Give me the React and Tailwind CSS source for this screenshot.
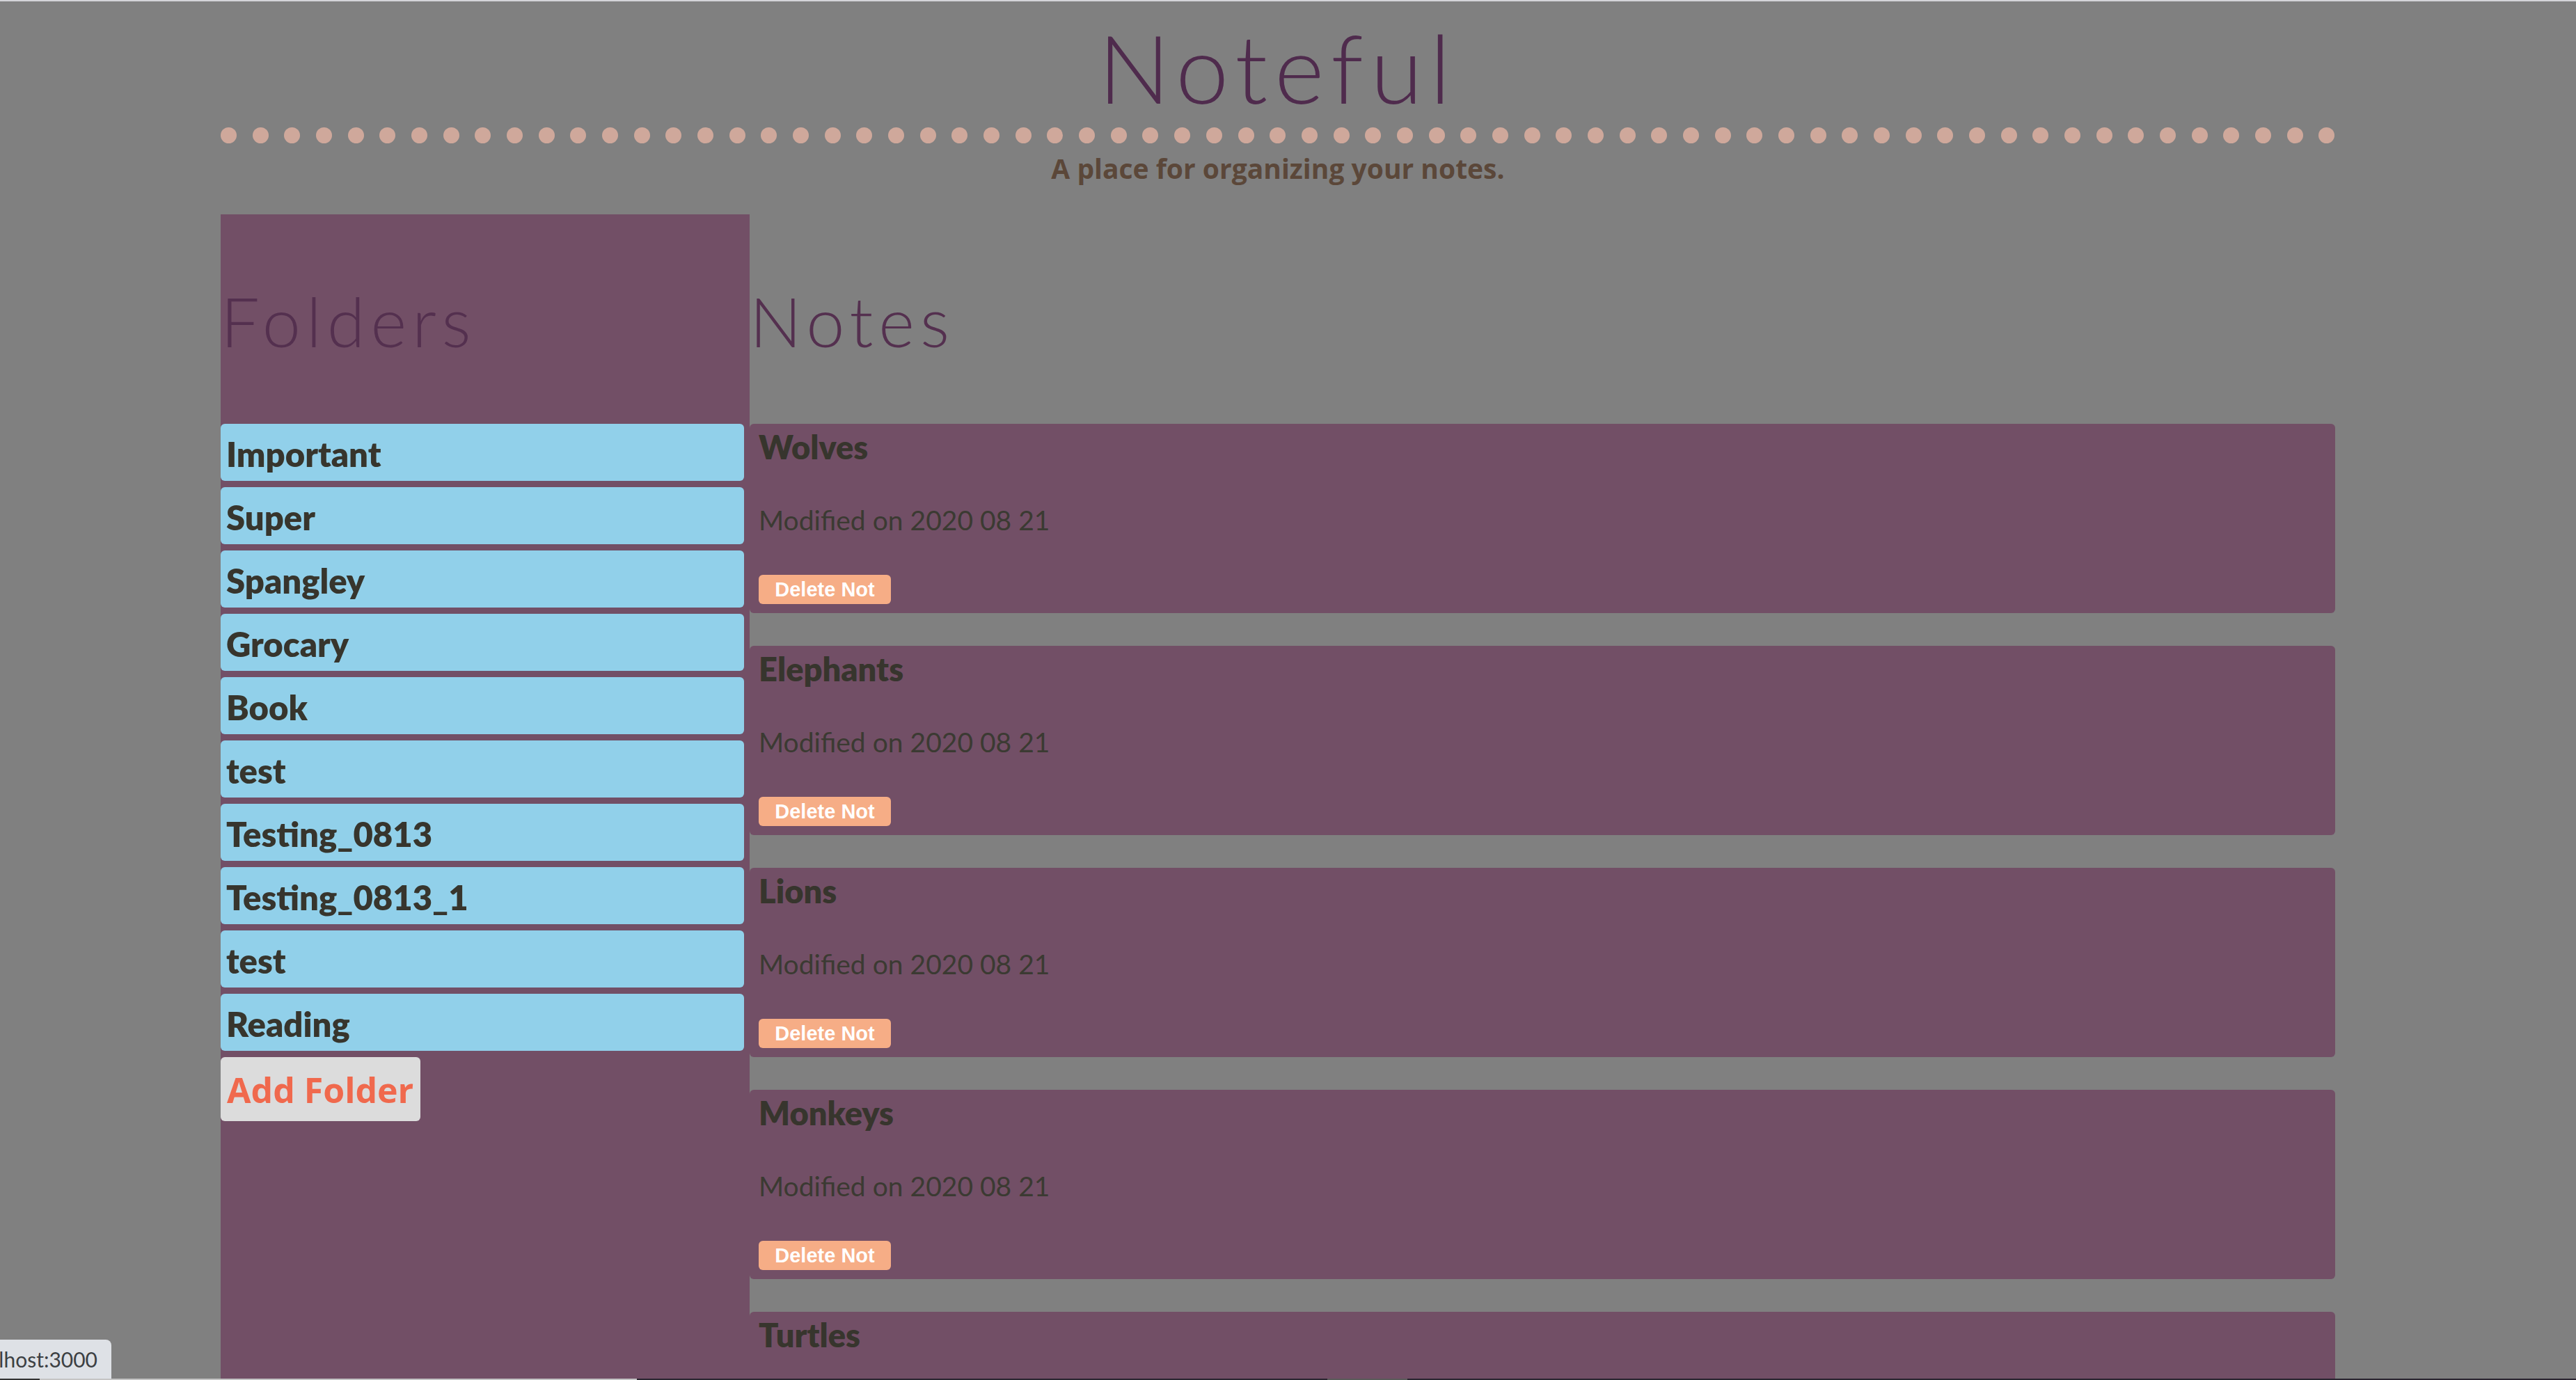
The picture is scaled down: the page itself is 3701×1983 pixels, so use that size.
const folders = [
  "Important",
  "Super",
  "Spangley",
  "Grocary",
  "Book",
  "test",
  "Testing_0813",
  "Testing_0813_1",
  "test",
  "Reading",
];

const notes = [
  { name: "Wolves", modified: "2020 08 21" },
  { name: "Elephants", modified: "2020 08 21" },
  { name: "Lions", modified: "2020 08 21" },
  { name: "Monkeys", modified: "2020 08 21" },
  { name: "Turtles", modified: "2020 08 21" },
];

const dots = Array.from({ length: 67 }, (_, i) => i);

const lato = { fontFamily: "Lato, 'Open Sans', sans-serif" };
const openSans = { fontFamily: "'Open Sans', Lato, sans-serif" };

const App = () => {
  return (
    <div
      className="relative h-[1983px] overflow-hidden bg-[#808080] border-t-2 border-[#d4d4d8]"
      style={lato}
    >
      <div className="ml-[317px] w-[3038px]">
        <header className="pt-[12px] flex flex-col items-center">
          <h1 className="text-[137px] leading-[1.2] font-light tracking-[10px] text-[#4f2b4d]">
            Noteful
          </h1>
          <div className="mt-[5px] w-full flex justify-between">
            {dots.map((d) => (
              <span key={d} className="block w-[23px] h-[23px] rounded-full bg-[#cfa89b]"></span>
            ))}
          </div>
          <p
            className="mt-[9px] text-[39px] leading-[1.362] font-bold text-[#5b4739]"
            style={openSans}
          >
            A place for organizing your notes.
          </p>
        </header>

        <main className="mt-[39px] flex items-stretch h-[1700px]">
          <nav className="w-[760px] bg-[#724f66] pt-[94px]">
            <h2 className="text-[99px] leading-[1.2] font-light tracking-[8px] text-[#54304f]">
              Folders
            </h2>
            <ul className="mt-[89px]">
              {folders.map((f, i) => (
                <li
                  key={i}
                  className="w-[752px] h-[82px] mb-[9px] pl-[8px] pt-[14px] rounded-[6px] bg-[#91d0ea] text-[49px] leading-[1.2] font-extrabold text-[#37352d]"
                >
                  {f}
                </li>
              ))}
            </ul>
            <button
              className="mt-[7px] w-[287px] h-[92px] pl-[9px] pt-[13px] text-left rounded-[6px] bg-[#dcdcdc] text-[50px] leading-[1.362] font-bold text-[#f0694d] flex"
              style={openSans}
            >
              Add Folder
            </button>
          </nav>

          <section className="flex-1">
            <h2 className="pt-[94px] text-[99px] leading-[1.2] font-light tracking-[8px] text-[#54304f]">
              Notes
            </h2>
            <ul className="mt-[89px]">
              {notes.map((n, i) => (
                <li
                  key={i}
                  className="h-[272px] mb-[47px] pl-[13px] pt-[5px] rounded-[6px] bg-[#724f66] flex flex-col items-start"
                >
                  <h3 className="text-[47px] leading-[1.2] font-extrabold text-[#37352d]">{n.name}</h3>
                  <p className="mt-[53px] text-[39px] leading-[1.2] text-[#3b3a32]">
                    Modified on {n.modified}
                  </p>
                  <button
                    className="mt-[56px] w-[190px] h-[42px] rounded-[6px] bg-[#f6ad86] text-white text-[29px] font-bold leading-[1.15] flex items-center justify-center"
                    style={{ fontFamily: "'Liberation Sans', Arial, sans-serif" }}
                  >
                    Delete Not
                  </button>
                </li>
              ))}
            </ul>
          </section>
        </main>
      </div>

      <div className="absolute left-0 bottom-[2px] w-[160px] h-[56px] rounded-tr-[8px] bg-[#dee1e6] flex items-center justify-end pr-[20px] overflow-hidden">
        <span className="text-[30px] leading-[1.2] text-[#3c4043] whitespace-nowrap">localhost:3000</span>
      </div>
      <div className="absolute left-0 bottom-0 w-full h-[2px] flex">
        <span className="block w-[57px] bg-[#333333]"></span>
        <span className="block w-[858px] bg-[#c4c4c4]"></span>
        <span className="block w-[992px] bg-[#2a2530]"></span>
        <span className="block w-[115px] bg-[#5a5a5a]"></span>
        <span className="block flex-1 bg-[#2a2530]"></span>
      </div>
    </div>
  );
};

export default App;
